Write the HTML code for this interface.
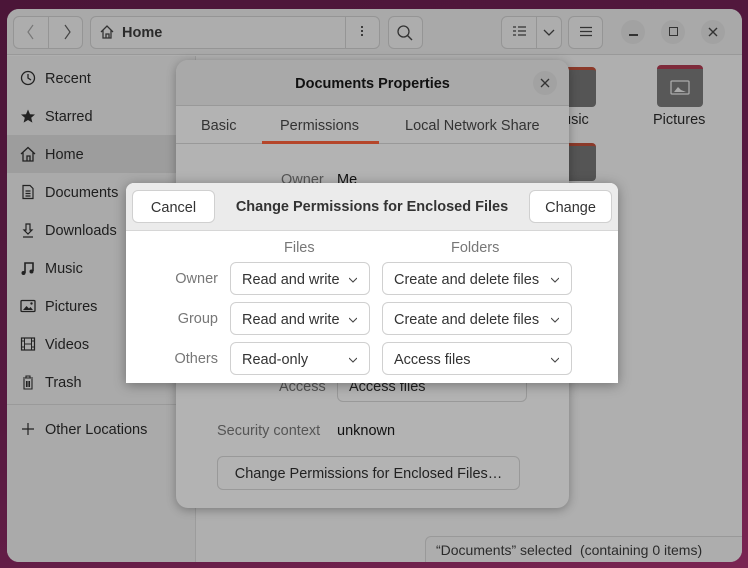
<!DOCTYPE html>
<html><head><meta charset="utf-8"><style>
*{box-sizing:border-box;margin:0;padding:0}
body{width:748px;height:568px;overflow:hidden;position:relative;font-family:"Liberation Sans","DejaVu Sans",sans-serif;font-size:14px;color:#2b2b2b;background:linear-gradient(160deg,#4b1538 0%,#561940 50%,#7a2552 100%)}
.a{position:absolute}
.win{left:7px;top:9px;width:735px;height:553px;border-radius:12px;background:#afafaf;overflow:hidden}
.hb{left:0;top:0;width:735px;height:46px;background:#a9a9a9;border-bottom:1px solid #999}
.btn{border:1px solid #959595;border-radius:6px;background:#adadad}
.side{left:0;top:47px;width:189px;height:506px;background:#aaaaaa;border-right:1px solid #9c9c9c}
.si{left:0;width:189px;height:38px;line-height:40px;padding-left:38px;font-size:14.5px;color:#1e1e1e}
.ic{position:absolute;left:13px;top:11px;width:16px;height:16px}
.dlg{left:176px;top:60px;width:393px;height:448px;background:#b3b3b3;border-radius:12px;box-shadow:0 2px 10px rgba(0,0,0,.3);overflow:hidden}
.wc{width:24px;height:24px;border-radius:12px;background:#a2a2a2}
.cp{left:126px;top:183px;width:492px;height:200px;background:#fff;border-radius:8px 8px 0 0;box-shadow:0 2px 12px rgba(0,0,0,.35);overflow:hidden}
.wb{border:1px solid #d0d0d0;border-radius:6px;background:#fff;height:33px;line-height:34px;padding-left:11px;font-size:14.5px;color:#333}
.chev{position:absolute;right:12px;top:13px;width:8px;height:8px}
.lbl{font-size:14.5px;color:#777;text-align:right;width:92px}
</style></head><body>
<div class="a win">
 <div class="a hb">
  <div class="a btn" style="left:6px;top:7px;width:70px;height:33px"></div>
  <div class="a" style="left:41px;top:7px;width:1px;height:33px;background:#959595"></div>
  <svg class="a" style="left:18px;top:14px" width="12" height="18"><path d="M8 2 L3 9 L8 16" stroke="#777" fill="none" stroke-width="1.2"/></svg>
  <svg class="a" style="left:54px;top:14px" width="12" height="18"><path d="M4 2 L9 9 L4 16" stroke="#444" fill="none" stroke-width="1.2"/></svg>
  <div class="a btn" style="left:83px;top:7px;width:290px;height:33px"></div>
  <div class="a" style="left:338px;top:7px;width:1px;height:33px;background:#959595"></div>
  <svg class="a" style="left:92px;top:15px" width="16" height="16"><path d="M2 8 L8 2 L14 8 M4 6 V14 H12 V6 M7 14 V10 H10 V14" stroke="#333" fill="none" stroke-width="1.3"/></svg>
  <div class="a" style="left:115px;top:16px;font-weight:bold;font-size:14.5px;color:#2b2b2b">Home</div>
  <div class="a" style="left:354px;top:16px;width:2px;height:12px;background:radial-gradient(circle,#333 1px,transparent 1.2px) 0 0/2px 4px"></div>
  <div class="a btn" style="left:381px;top:7px;width:35px;height:33px"></div>
  <svg class="a" style="left:389px;top:15px" width="18" height="18"><circle cx="7.5" cy="7.5" r="5.5" stroke="#333" fill="none" stroke-width="1.3"/><path d="M11.5 11.5 L16 16" stroke="#333" stroke-width="1.4"/></svg>
  <div class="a btn" style="left:494px;top:7px;width:61px;height:33px"></div>
  <div class="a" style="left:529px;top:7px;width:1px;height:33px;background:#959595"></div>
  <svg class="a" style="left:505px;top:16px" width="16" height="14"><path d="M1 2h3M1 6h3M1 10h3M6 2h8M6 6h8M6 10h8" stroke="#333" stroke-width="1.3"/></svg>
  <svg class="a" style="left:535px;top:19px" width="14" height="10"><path d="M2 2 L7 7 L12 2" stroke="#333" fill="none" stroke-width="1.3"/></svg>
  <div class="a btn" style="left:561px;top:7px;width:35px;height:33px"></div>
  <svg class="a" style="left:572px;top:17px" width="14" height="12"><path d="M1 1.5h12M1 5.5h12M1 9.5h12" stroke="#333" stroke-width="1.2"/></svg>
  <div class="a wc" style="left:614px;top:11px"></div>
  <div class="a" style="left:622px;top:25px;width:9px;height:1.5px;background:#333"></div>
  <div class="a wc" style="left:654px;top:11px"></div>
  <div class="a" style="left:662px;top:18px;width:9px;height:9px;border:1.3px solid #333"></div>
  <div class="a wc" style="left:694px;top:11px"></div>
  <svg class="a" style="left:701px;top:18px" width="10" height="10"><path d="M1 1L9 9M9 1L1 9" stroke="#333" stroke-width="1.4"/></svg>
 </div>
 <div class="a side">
  <div class="a si" style="top:3px"><svg class="ic"><circle cx="8" cy="8" r="6.5" stroke="#222" fill="none" stroke-width="1.3"/><path d="M8 4V8L11 10" stroke="#222" fill="none" stroke-width="1.3"/></svg>Recent</div>
  <div class="a si" style="top:41px"><svg class="ic"><path d="M8 1.5L10 6.2L15 6.5L11.2 9.7L12.4 14.6L8 12L3.6 14.6L4.8 9.7L1 6.5L6 6.2Z" fill="#222"/></svg>Starred</div>
  <div class="a si" style="top:79px;background:#9d9d9d"><svg class="ic"><path d="M1 8 L8 1.5 L15 8 M3 6 V15 H13 V6 M7 15 V10 H10 V15" stroke="#222" fill="none" stroke-width="1.3"/></svg>Home</div>
  <div class="a si" style="top:117px"><svg class="ic"><path d="M3 1.5H10L13 4.5V14.5H3Z M5.5 7H10.5 M5.5 9.5H10.5 M5.5 12H10.5" stroke="#222" fill="none" stroke-width="1.2"/></svg>Documents</div>
  <div class="a si" style="top:155px"><svg class="ic"><path d="M6 2V8H4L8 12L12 8H10V2Z M3 15H13" stroke="#222" fill="none" stroke-width="1.2"/></svg>Downloads</div>
  <div class="a si" style="top:193px"><svg class="ic"><path d="M5 13V3H13V11" stroke="#222" fill="none" stroke-width="1.6"/><circle cx="3.5" cy="13" r="2" fill="#222"/><circle cx="11.5" cy="11.5" r="2" fill="#222"/></svg>Music</div>
  <div class="a si" style="top:231px"><svg class="ic"><rect x="1" y="2.5" width="14" height="11" rx="1" stroke="#222" fill="none" stroke-width="1.3"/><path d="M3 12L6.5 8L9 10.5L10.5 9L13 12Z" fill="#222"/><circle cx="11.5" cy="5.5" r="1.2" fill="#222"/></svg>Pictures</div>
  <div class="a si" style="top:269px"><svg class="ic"><rect x="1.5" y="2" width="13" height="12" stroke="#222" fill="none" stroke-width="1.2"/><path d="M4.5 2V14M11.5 2V14M4.5 8H11.5M1.5 5H4.5M1.5 11H4.5M11.5 5H14.5M11.5 11H14.5" stroke="#222" stroke-width="1"/></svg>Videos</div>
  <div class="a si" style="top:307px"><svg class="ic"><path d="M3 4H13 M6 4V2H10V4 M4 5V15H12V5 M6.5 7V13M8 7V13M9.5 7V13" stroke="#222" fill="none" stroke-width="1.1"/></svg>Trash</div>
  <div class="a" style="left:0;top:348px;width:189px;height:1px;background:#9a9a9a"></div>
  <div class="a si" style="top:354px"><svg class="ic"><path d="M8 2V14M2 8H14" stroke="#222" stroke-width="1.2"/></svg>Other Locations</div>
 </div>
 <div class="a" style="left:549px;top:58px;width:40px;height:40px;border-radius:4px;background:#555;border-top:3px solid #8b3a2a"></div>
 <div class="a" style="left:556px;top:103px;font-size:14.5px;color:#1e1e1e">usic</div>
 <div class="a" style="left:650px;top:56px;width:46px;height:42px;border-radius:4px;background:#585858;border-top:4px solid #7e2b3b"></div>
 <svg class="a" style="left:663px;top:71px" width="20" height="16"><rect x="1" y="1" width="18" height="13" rx="1" stroke="#aaa" fill="none" stroke-width="1.3"/><path d="M4 12L8 7L11 10L16 12Z" fill="#aaa"/></svg>
 <div class="a" style="left:646px;top:103px;font-size:14.5px;color:#1e1e1e">Pictures</div>
 <div class="a" style="left:549px;top:134px;width:40px;height:38px;border-radius:4px;background:#555;border-top:3px solid #8b3a2a"></div>
 <div class="a" style="left:418px;top:527px;width:320px;height:28px;border:1px solid #999;border-radius:6px 0 0 0;background:#adadad;font-size:14px;line-height:26px;padding-left:10px;color:#2b2b2b">“Documents” selected&nbsp; (containing 0 items)</div>
</div>

<div class="a dlg">
 <div class="a" style="left:0;top:0;width:393px;height:46px;background:#a9a9a9;border-bottom:1px solid #999"></div>
 <div class="a" style="left:0;top:16px;width:393px;text-align:center;font-weight:bold;font-size:14.5px;color:#111">Documents Properties</div>
 <div class="a wc" style="left:357px;top:11px"></div>
 <svg class="a" style="left:364px;top:18px" width="10" height="10"><path d="M1 1L9 9M9 1L1 9" stroke="#333" stroke-width="1.3"/></svg>
 <div class="a" style="left:0;top:46px;width:393px;height:38px;border-bottom:1px solid #999"></div>
 <div class="a" style="left:25px;top:58px;font-size:14.5px;color:#333">Basic</div>
 <div class="a" style="left:104px;top:58px;font-size:14.5px;color:#333">Permissions</div>
 <div class="a" style="left:86px;top:81px;width:117px;height:3px;background:#b5462a"></div>
 <div class="a" style="left:229px;top:58px;font-size:14.5px;color:#333">Local Network Share</div>
 <div class="a" style="left:105px;top:112px;font-size:14.5px;color:#555">Owner</div>
 <div class="a" style="left:161px;top:112px;font-size:14.5px;color:#111">Me</div>
 <div class="a" style="left:103px;top:319px;font-size:14.5px;color:#555">Access</div>
 <div class="a" style="left:161px;top:300px;width:190px;height:42px;border:1px solid #999;border-radius:6px"></div>
 <div class="a" style="left:173px;top:319px;font-size:14.5px;color:#222">Access files</div>
 <div class="a" style="left:41px;top:363px;font-size:14.5px;color:#555">Security context</div>
 <div class="a" style="left:161px;top:363px;font-size:14.5px;color:#111">unknown</div>
 <div class="a" style="left:41px;top:396px;width:303px;height:34px;border:1px solid #999;border-radius:6px;text-align:center;line-height:34px;font-size:14.5px;color:#222">Change Permissions for Enclosed Files…</div>
</div>

<div class="a cp">
 <div class="a" style="left:0;top:0;width:492px;height:48px;background:#ebebeb;border-bottom:1px solid #d6d6d6"></div>
 <div class="a wb" style="left:6px;top:7px;width:83px;text-align:center;padding:0">Cancel</div>
 <div class="a" style="left:0;top:16px;width:492px;text-align:center;font-weight:bold;font-size:14.5px;color:#333">Change Permissions for Enclosed Files</div>
 <div class="a wb" style="left:403px;top:7px;width:83px;text-align:center;padding:0">Change</div>
 <div class="a" style="left:158px;top:57px;font-size:14.5px;color:#777">Files</div>
 <div class="a" style="left:325px;top:57px;font-size:14.5px;color:#777">Folders</div>
 <div class="a lbl" style="left:0;top:88px">Owner</div>
 <div class="a lbl" style="left:0;top:128px">Group</div>
 <div class="a lbl" style="left:0;top:168px">Others</div>
 <div class="a wb" style="left:104px;top:79px;width:140px">Read and write<svg class="chev"><path d="M0 2L4 6L8 2" stroke="#444" fill="none" stroke-width="1.1"/></svg></div>
 <div class="a wb" style="left:256px;top:79px;width:190px">Create and delete files<svg class="chev"><path d="M0 2L4 6L8 2" stroke="#444" fill="none" stroke-width="1.1"/></svg></div>
 <div class="a wb" style="left:104px;top:119px;width:140px">Read and write<svg class="chev"><path d="M0 2L4 6L8 2" stroke="#444" fill="none" stroke-width="1.1"/></svg></div>
 <div class="a wb" style="left:256px;top:119px;width:190px">Create and delete files<svg class="chev"><path d="M0 2L4 6L8 2" stroke="#444" fill="none" stroke-width="1.1"/></svg></div>
 <div class="a wb" style="left:104px;top:159px;width:140px">Read-only<svg class="chev"><path d="M0 2L4 6L8 2" stroke="#444" fill="none" stroke-width="1.1"/></svg></div>
 <div class="a wb" style="left:256px;top:159px;width:190px">Access files<svg class="chev"><path d="M0 2L4 6L8 2" stroke="#444" fill="none" stroke-width="1.1"/></svg></div>
</div>
</body></html>
